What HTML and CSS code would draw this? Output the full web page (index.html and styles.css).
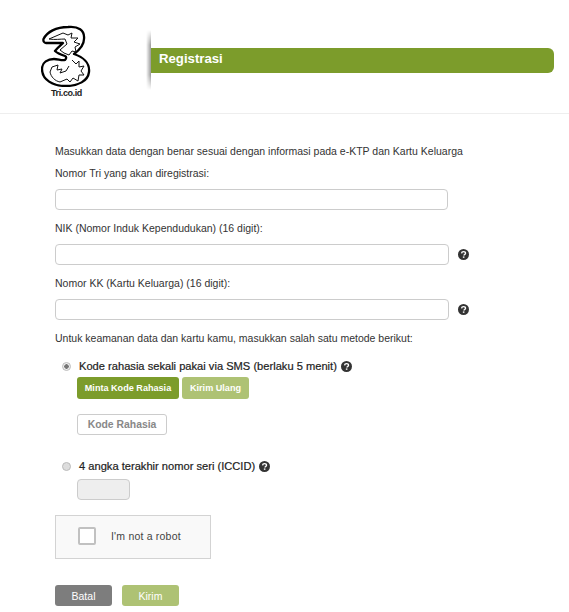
FILE: index.html
```html
<!DOCTYPE html>
<html lang="id">
<head>
<meta charset="utf-8">
<title>Registrasi</title>
<link rel="stylesheet" href="styles.css">
</head>
<body>
<svg class="defs" width="0" height="0" aria-hidden="true">
  <symbol id="q" viewBox="0 0 12 12">
    <circle cx="6" cy="6" r="6" fill="#333"/>
    <path d="M3.9 4.8C4 3.4 5 2.8 6 2.8c1.3 0 2.2.7 2.2 1.7 0 .9-.6 1.2-1.1 1.6-.5.3-.6.5-.6 1" fill="none" stroke="#fff" stroke-width="1.5"/>
    <rect x="5.3" y="8.1" width="1.7" height="1.5" fill="#fff"/>
  </symbol>
</svg>
<header class="top">
  <div class="logo">
    <svg class="logo-mark" width="50" height="62" viewBox="41 25 50 62">
      <path d="M43.5 39C47 32 56 27 68 27C78 26 85 30 84 39C84 46 78 51 74 54C83 57 90 63 89 72C88 81 78 86 66 86C53 86 42 80 42 69C42 62 48 59 54 59C58 59 62 61 65 60C66 59 67 57 65 56C62 55 57 53 55 51C58 47 62 44 63 43C57 43 50 43 46 43C44 43 43 41 43.5 39Z" fill="#fff" stroke="#000" stroke-width="2.3" stroke-linejoin="round"/>
      <path d="M49 39L56 36L63 33L68 35L72 33L71 38L78 38L74 42L80 44L75 47L76 52L72 51L69 55L64 53L60 50L67 44L65 39C60 39 55 40 49 39Z" fill="none" stroke="#111" stroke-width="1"/>
      <path d="M72 60L76 64L79 61L79 67L84 66L81 71L84 75L79 75L78 81L73 78L70 82L67 79L60 82C55 81 51 77 50 72L52 67L58 65L57 70L62 69L60 73L66 71L69 66" fill="none" stroke="#111" stroke-width="1"/>
    </svg>
    <span class="logo-text">Tri.co.id</span>
  </div>
  <div class="title-wrap">
    <h1 class="title">Registrasi</h1>
  </div>
</header>
<main class="form">
  <p class="intro">Masukkan data dengan benar sesuai dengan informasi pada e-KTP dan Kartu Keluarga</p>
  <label class="lbl">Nomor Tri yang akan diregistrasi:</label>
  <div class="field"><input class="inp inp-short" type="text"></div>
  <label class="lbl">NIK (Nomor Induk Kependudukan) (16 digit):</label>
  <div class="field"><input class="inp" type="text"><svg class="help help-field"><use href="#q"/></svg></div>
  <label class="lbl">Nomor KK (Kartu Keluarga) (16 digit):</label>
  <div class="field"><input class="inp" type="text"><svg class="help help-field"><use href="#q"/></svg></div>
  <p class="lbl lbl-method">Untuk keamanan data dan kartu kamu, masukkan salah satu metode berikut:</p>

  <div class="method">
    <span class="radio radio-on"></span>
    <span class="method-text">Kode rahasia sekali pakai via SMS (berlaku 5 menit)</span>
    <svg class="help"><use href="#q"/></svg>
  </div>
  <div class="sub">
    <div class="btn-row">
      <button class="btn btn-code" type="button">Minta Kode Rahasia</button>
      <button class="btn btn-code btn-light" type="button">Kirim Ulang</button>
    </div>
    <div class="code-box">Kode Rahasia</div>
  </div>

  <div class="method method-2">
    <span class="radio"></span>
    <span class="method-text">4 angka terakhir nomor seri (ICCID)</span>
    <svg class="help"><use href="#q"/></svg>
  </div>
  <div class="sub sub-iccid"><div class="iccid"></div></div>

  <div class="captcha">
    <span class="check"></span>
    <span class="captcha-text">I'm not a robot</span>
  </div>

  <div class="actions">
    <button class="act act-grey" type="button">Batal</button>
    <button class="act act-green" type="button">Kirim</button>
  </div>
</main>
</body>
</html>
```
FILE: styles.css
```css
* { box-sizing: border-box; }
html, body { margin: 0; padding: 0; background: #fff; }
body {
  font-family: "Liberation Sans", Arial, sans-serif;
  font-size: 12px;
  color: #333;
  height: 612px;
  overflow: hidden;
}
.defs { position: absolute; }
.top {
  height: 114px;
  display: flex;
  border-bottom: 1px solid #eee;
  padding: 25px 15px 0 41px;
}
.logo {
  width: 110px;
  display: flex;
  flex-direction: column;
  align-items: flex-start;
}
.logo-mark { display: block; }
.logo-text {
  font-size: 9px;
  font-weight: bold;
  letter-spacing: -0.4px;
  color: #222;
  margin: 1px 0 0 10px;
  line-height: 11px;
}
.title-wrap {
  flex: 1;
  height: 60px;
  margin-top: 5px;
  display: flex;
  align-items: center;
  position: relative;
}
.title-wrap::before {
  content: "";
  position: absolute;
  left: -5px;
  top: 0;
  bottom: 0;
  width: 5px;
  background: linear-gradient(to left, rgba(0,0,0,.4), rgba(0,0,0,0));
  -webkit-mask-image: linear-gradient(to bottom, transparent, #000 25%, #000 75%, transparent);
  mask-image: linear-gradient(to bottom, transparent, #000 25%, #000 75%, transparent);
}
.title {
  margin: 1px 0 0;
  flex: 1;
  height: 25px;
  background: #7c9c2b;
  color: #fff;
  font-size: 13.2px;
  line-height: 22px;
  font-weight: bold;
  padding-left: 8px;
  border-radius: 0 6px 6px 0;
}
.form { padding: 30px 0 0 55px; }
.intro, .lbl {
  display: block;
  margin: 0;
  line-height: 14px;
  font-size: 10.5px;
}
.intro { margin-bottom: 8px; }
.lbl { margin-bottom: 9px; }
.field {
  display: flex;
  align-items: center;
  height: 21px;
  margin-bottom: 11px;
}
.inp {
  width: 394px;
  height: 21px;
  border: 1px solid #ccc;
  border-radius: 4px;
  background: #fff;
  padding: 0;
}
.inp-short { width: 393px; }
.help {
  width: 11px;
  height: 11px;
  display: block;
  flex: none;
}
.help-field { margin-left: 9px; }
.lbl-method { margin-bottom: 14px; }
.method {
  display: flex;
  align-items: center;
  height: 14px;
  margin-left: 7px;
}
.radio {
  width: 9px;
  height: 9px;
  border-radius: 50%;
  background: #ddd;
  border: 1px solid #bbb;
  margin-right: 8px;
  flex: none;
}
.radio-on {
  background: radial-gradient(circle, #777 0 2px, #eee 2.5px);
}
.method-text {
  color: #222;
  font-size: 11.13px;
  -webkit-text-stroke: 0.2px #222;
  margin-right: 4px;
}
.sub { margin: 4px 0 0 22px; }
.sub-iccid { margin-top: 6px; }
.btn-row { display: flex; gap: 3px; }
.btn-code {
  height: 22px;
  width: 102px;
  border: 0;
  padding: 0;
  border-radius: 3px;
  background: #7c9c2b;
  color: #fff;
  font: bold 9.1px "Liberation Sans", Arial, sans-serif;
}
.btn-light { width: 67px; background: #aec274; }
.code-box {
  margin-top: 15px;
  width: 90px;
  height: 21px;
  border: 1px solid #ccc;
  border-radius: 3px;
  color: #888;
  font-weight: bold;
  font-size: 10.4px;
  line-height: 20px;
  text-align: center;
}
.method-2 { margin-top: 24px; }
.iccid {
  width: 53px;
  height: 21px;
  background: #eee;
  border: 1px solid #ccc;
  border-radius: 4px;
}
.captcha {
  margin-top: 15px;
  width: 156px;
  height: 44px;
  background: #f9f9f9;
  border: 1px solid #d3d3d3;
  display: flex;
  align-items: center;
  padding: 0 0 2px 22px;
}
.check {
  width: 18px;
  height: 18px;
  background: #fff;
  border: 2px solid #c1c1c1;
  border-radius: 2px;
  margin-right: 15px;
}
.captcha-text { font-size: 10.5px; color: #444; letter-spacing: 0.2px; margin-bottom: 1px; }
.actions { margin-top: 26px; display: flex; gap: 10px; }
.act {
  width: 57px;
  height: 21px;
  border: 0;
  padding: 0;
  border-radius: 3px;
  color: #fff;
  font: 10.5px "Liberation Sans", Arial, sans-serif;
}
.act-grey { background: #7d7d7d; }
.act-green { background: #aec274; }
```
